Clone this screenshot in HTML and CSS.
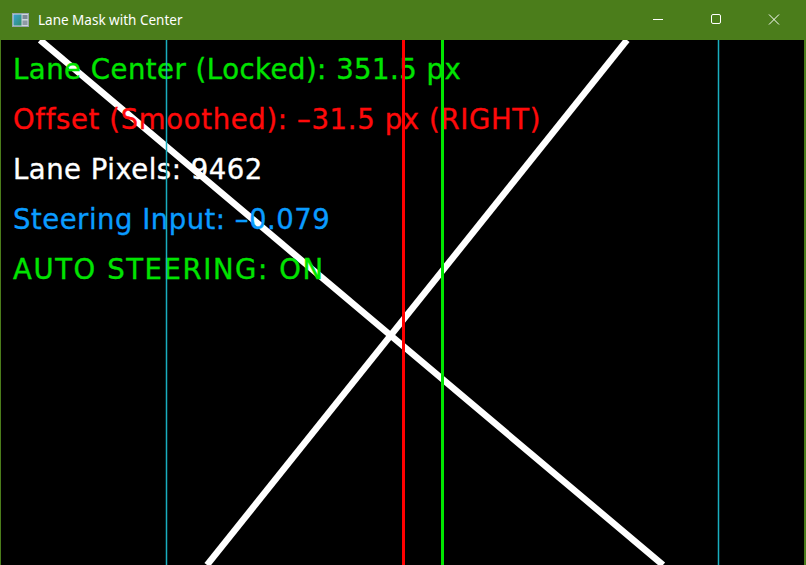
FILE: index.html
```html
<!DOCTYPE html>
<html>
<head>
<meta charset="utf-8">
<link rel="stylesheet" href="styles.css">
</head>
<body>
<div class="window">
  <div class="titlebar">
    <svg class="app-icon" width="17" height="14" viewBox="0 0 17 14">
      <defs>
        <linearGradient id="g" x1="0" y1="0" x2="1" y2="1">
          <stop offset="0" stop-color="#3aa0d8"/>
          <stop offset="1" stop-color="#2f8f6a"/>
        </linearGradient>
      </defs>
      <rect x="0.5" y="0.5" width="16" height="13" fill="#cfd6dc" stroke="#9aa6b0"/>
      <rect x="1.5" y="1.5" width="8" height="11" fill="url(#g)"/>
      <rect x="10.5" y="2" width="5" height="4" fill="#7d8a96"/>
      <rect x="10.5" y="7.5" width="5" height="4.5" fill="#8e9aa5"/>
    </svg>
    <span class="title">Lane Mask with Center</span>
    <div class="controls">
      <svg class="ctl" width="46" height="40" viewBox="0 0 46 40"><path d="M18 19.5h10" stroke="#fff" stroke-width="1"/></svg>
      <svg class="ctl" width="46" height="40" viewBox="0 0 46 40"><rect x="18.5" y="14.5" width="9" height="9" rx="1.5" fill="none" stroke="#fff" stroke-width="1"/></svg>
      <svg class="ctl" width="46" height="40" viewBox="0 0 46 40"><path d="M18 14.5l10 10M28 14.5l-10 10" stroke="#fff" stroke-width="1"/></svg>
    </div>
  </div>
  <div class="canvas">
    <svg class="layer" width="803" height="525" viewBox="0 0 803 525">
      <line x1="39" y1="0" x2="662" y2="525" stroke="#fff" stroke-width="6.5"/>
      <line x1="626" y1="0" x2="206" y2="525" stroke="#fff" stroke-width="6.5"/>
    </svg>
    <div class="text">
      <div class="ln green">Lane Center (Locked): 351.5 px</div>
      <div class="ln red wide">Offset (Smoothed): &#8211;31.5 px (RIGHT)</div>
      <div class="ln white">Lane Pixels: 9462</div>
      <div class="ln blue">Steering Input: &#8211;0.079</div>
      <div class="ln green caps">AUTO STEERING: ON</div>
    </div>
    <svg class="layer" width="803" height="525" viewBox="0 0 803 525">
      <line x1="165.5" y1="0" x2="165.5" y2="525" stroke="#19aebf" stroke-width="1.5"/>
      <line x1="717.5" y1="0" x2="717.5" y2="525" stroke="#19aebf" stroke-width="1.5"/>
      <line x1="402.5" y1="0" x2="402.5" y2="525" stroke="#ff0000" stroke-width="3"/>
      <line x1="441.5" y1="0" x2="441.5" y2="525" stroke="#00e600" stroke-width="3"/>
    </svg>
  </div>
</div>
</body>
</html>
```

FILE: styles.css
```css
html, body {
  margin: 0;
  padding: 0;
  background: #4b7d1b;
  overflow: hidden;
}
.window {
  width: 806px;
  height: 565px;
  background: #4b7d1b;
  display: flex;
  flex-direction: column;
}
.titlebar {
  height: 40px;
  display: flex;
  align-items: center;
  flex-shrink: 0;
}
.app-icon {
  margin-left: 12px;
  margin-top: -1px;
}
.title {
  margin-left: 9px;
  color: #ffffff;
  font-family: "Noto Sans", "Open Sans", sans-serif;
  font-size: 13.5px;
  margin-top: -1px;
}
.controls {
  margin-left: auto;
  display: flex;
  margin-right: 9px;
}
.ctl {
  display: block;
  margin-left: 12px;
}
.canvas {
  position: relative;
  margin-left: 1px;
  width: 803px;
  height: 525px;
  background: #000;
  overflow: hidden;
}
.layer {
  position: absolute;
  left: 0;
  top: 0;
  display: block;
}
.text {
  position: relative;
  padding-top: 4px;
  padding-left: 12px;
}
.ln {
  font-family: "DejaVu Sans", "Liberation Sans", sans-serif;
  font-size: 27.5px;
  line-height: 50px;
  letter-spacing: 0.5px;
  white-space: nowrap;
  -webkit-text-stroke: 0.35px currentColor;
}
.wide { letter-spacing: 0.65px; }
.caps { letter-spacing: 1.6px; }
.green { color: #00e400; }
.red { color: #ff0a0a; }
.white { color: #ffffff; }
.blue { color: #0a9cff; }
```
